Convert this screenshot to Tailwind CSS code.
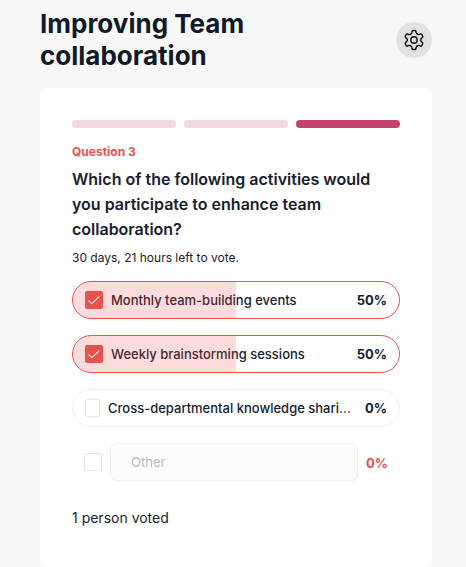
<!DOCTYPE html>
<html lang="en">
<head>
    <meta charset="UTF-8">
    <meta name="viewport" content="width=device-width, initial-scale=1.0">
    <title>Improving Team collaboration</title>
    <script src="https://cdn.jsdelivr.net/npm/@tailwindcss/browser@4"></script>
</head>
<body class="bg-[#f7f7f7] h-screen overflow-hidden font-['Inter',sans-serif] text-[#172030]">
    <div class="px-10 pr-[34px] pt-2">
        <header class="flex justify-between items-center mb-4">
            <h1 class="w-[300px] text-[26px] leading-8 font-bold text-[#111a29]">Improving Team collaboration</h1>
            <button class="w-9 h-9 rounded-full bg-[#e0e1e2] flex items-center justify-center">
                <svg class="w-6 h-6" viewBox="-12 -12 24 24" fill="none" stroke="#111" stroke-width="1.4" stroke-linecap="round" stroke-linejoin="round">
                    <!-- one tooth, repeated every 60 degrees -->
                    <path id="tooth" d="M-3.4-5.9C-2.8-6.3-2.3-6.4-2.2-7.1L-2-8.5Q-1.8-9.5-.9-9.5H.9Q1.8-9.5 2-8.5L2.2-7.1C2.3-6.4 2.8-6.3 3.4-5.9"/>
                    <use href="#tooth" transform="rotate(60)"/>
                    <use href="#tooth" transform="rotate(120)"/>
                    <use href="#tooth" transform="rotate(180)"/>
                    <use href="#tooth" transform="rotate(240)"/>
                    <use href="#tooth" transform="rotate(300)"/>
                    <circle r="3.2"/>
                </svg>
            </button>
        </header>

        <main class="bg-white rounded-lg h-[482px] px-8 pt-8">
            <!-- progress -->
            <div class="grid grid-cols-3 gap-2">
                <div class="h-2 rounded-full bg-[#f2d8e0]"></div>
                <div class="h-2 rounded-full bg-[#f2d8e0]"></div>
                <div class="h-2 rounded-full bg-[#c4416a]"></div>
            </div>

            <p class="mt-4 text-xs leading-4 font-bold text-[#e9524d]">Question 3</p>
            <h2 class="mt-[7px] text-base leading-[25px] font-semibold">Which of the following activities would you participate to enhance team collaboration?</h2>
            <p class="mt-2 text-xs leading-4">30 days, 21 hours left to vote.</p>

            <div class="mt-[15px] flex flex-col gap-4 text-[13px]">
                <div class="relative h-[38px] flex items-center px-3 rounded-full border border-[#e9524d] overflow-hidden">
                    <span class="shrink-0 w-[18px] h-[18px] rounded-xs bg-[#e9524d] flex items-center justify-center">
                        <svg class="w-3.5 h-3.5" viewBox="0 0 14 14" fill="none" stroke="white" stroke-width="1.1"><path d="M1.5 7.5 5 10.7 12.3 3.5"/></svg>
                    </span>
                    <span class="ml-2 pt-0.5 grow font-medium">Monthly team-building events</span>
                    <span class="pt-0.5 font-bold">50%</span>
                    <div class="absolute left-0 inset-y-0 bg-[#e9524d]/20" style="width: 50%"></div>
                </div>

                <div class="relative h-[38px] flex items-center px-3 rounded-full border border-[#e9524d] overflow-hidden">
                    <span class="shrink-0 w-[18px] h-[18px] rounded-xs bg-[#e9524d] flex items-center justify-center">
                        <svg class="w-3.5 h-3.5" viewBox="0 0 14 14" fill="none" stroke="white" stroke-width="1.1"><path d="M1.5 7.5 5 10.7 12.3 3.5"/></svg>
                    </span>
                    <span class="ml-2 pt-0.5 grow font-medium">Weekly brainstorming sessions</span>
                    <span class="pt-0.5 font-bold">50%</span>
                    <div class="absolute left-0 inset-y-0 bg-[#e9524d]/20" style="width: 50%"></div>
                </div>

                <div class="h-[38px] flex items-center px-3 rounded-full border border-[#f9e7eb]">
                    <span class="shrink-0 w-[15px] h-[18px] rounded-xs border border-[#e4e5e7]"></span>
                    <span class="ml-2 pt-0.5 w-[244px] truncate font-medium">Cross-departmental knowledge sharing</span>
                    <span class="ml-auto pt-0.5 font-bold">0%</span>
                </div>

                <div class="h-[38px] flex items-center px-3">
                    <span class="shrink-0 w-[18px] h-[18px] rounded-xs border border-[#e4e5e7]"></span>
                    <span class="ml-2 w-[248px] h-[38px] px-5 pt-0.5 flex items-center rounded-md border border-[#eeeeef] bg-[#fcfcfc] text-[#b9babc]">Other</span>
                    <span class="ml-2 pt-1 font-bold text-[#e9524d]">0%</span>
                </div>
            </div>

            <p class="mt-[27px] text-sm leading-5">1 person voted</p>
        </main>
    </div>
</body>
</html>
